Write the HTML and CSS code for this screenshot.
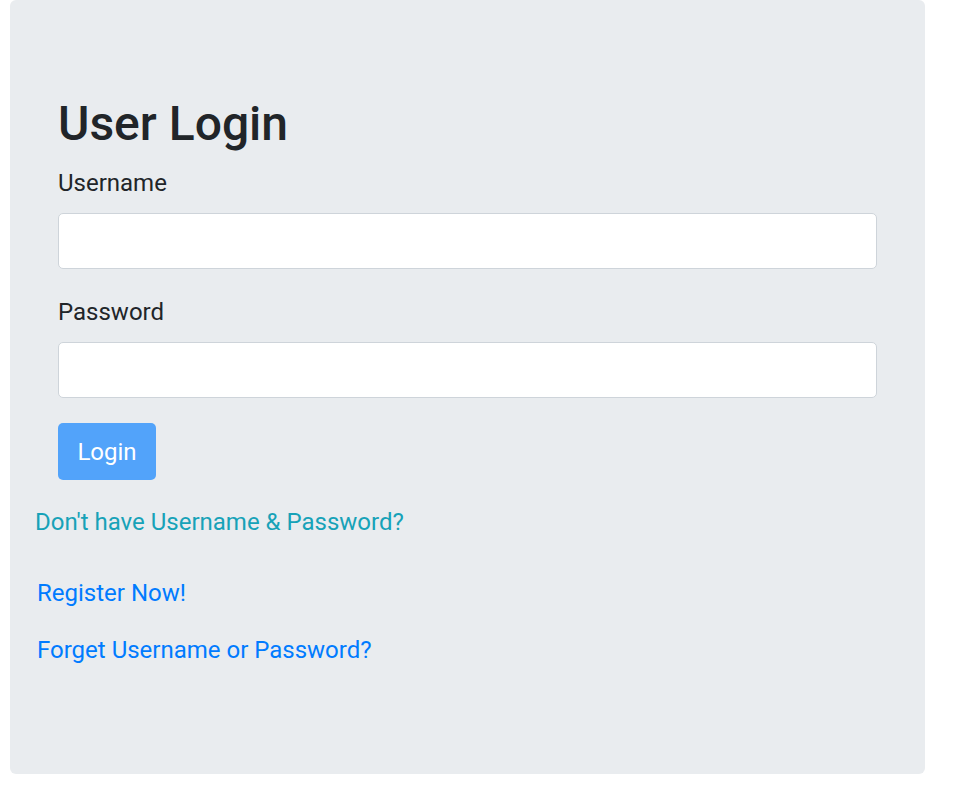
FILE: index.html
```html
<!DOCTYPE html>
<html lang="en">
<head>
<meta charset="utf-8">
<title>User Login</title>
<link rel="stylesheet" href="styles.css">
</head>
<body>
  <div class="panel">
    <form class="login-form">
      <h1 class="title">User Login</h1>
      <label class="field-label" for="username">Username</label>
      <input class="field-input" id="username" type="text">
      <label class="field-label field-label-gap" for="password">Password</label>
      <input class="field-input" id="password" type="password">
      <button class="login-btn" type="button">Login</button>
    </form>
    <p class="info-text">Don't have Username &amp; Password?</p>
    <div class="links">
      <a class="link" href="#">Register Now!</a>
      <a class="link" href="#">Forget Username or Password?</a>
    </div>
  </div>
</body>
</html>
```

FILE: styles.css
```css
* { box-sizing: border-box; }

html, body {
  margin: 0;
  padding: 0;
  background: #ffffff;
}

body {
  font-family: Roboto, "Liberation Sans", sans-serif;
  color: #212529;
  font-size: 24px;
  line-height: 1.5;
}

.panel {
  margin-left: 10px;
  width: 915px;
  background: #e9ecef;
  border-radius: 6px;
  padding: 95px 0 106px 0;
}

.login-form {
  display: flex;
  flex-direction: column;
  align-items: flex-start;
  padding: 0 48px;
}

.title {
  margin: 0 0 12px 0;
  font-size: 48px;
  font-weight: 500;
  line-height: 1.2;
  color: #212529;
}

.field-label {
  display: block;
  margin-bottom: 12px;
  font-size: 24px;
  line-height: 36px;
}

.field-label-gap {
  margin-top: 25px;
}

.field-input {
  display: block;
  width: 100%;
  height: 56px;
  border: 1px solid #ced4da;
  border-radius: 5px;
  background: #ffffff;
  font-family: inherit;
  font-size: 24px;
  padding: 0 19px;
}

.login-btn {
  margin-top: 25px;
  width: 98px;
  height: 57px;
  border: 0;
  border-radius: 5px;
  background: #52a3fa;
  color: #ffffff;
  font-family: inherit;
  font-size: 24px;
  line-height: 1.5;
  padding: 2px 0 0 0;
}

.info-text {
  margin: 24px 0 0 0;
  padding-left: 25px;
  color: #17a2b8;
  line-height: 36px;
}

.links {
  display: flex;
  flex-direction: column;
  align-items: flex-start;
  gap: 21px;
  margin-top: 35px;
  padding-left: 27px;
}

.link {
  color: #007bff;
  text-decoration: none;
  line-height: 36px;
}
```
